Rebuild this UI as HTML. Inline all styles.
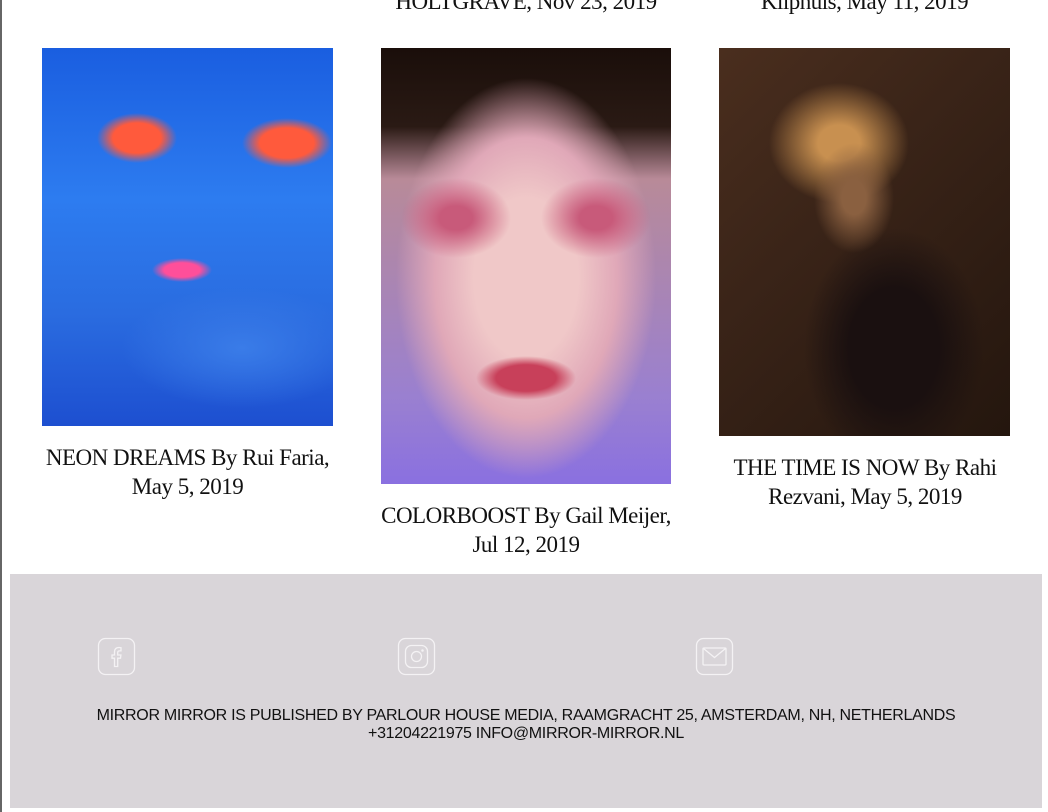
<!DOCTYPE html>
<html><head><meta charset="utf-8"><style>
*{margin:0;padding:0;box-sizing:border-box}
html,body{width:1048px;height:812px;overflow:hidden;background:#fff}
body{position:relative;font-family:"Liberation Serif",serif}
.lb{position:absolute;left:0;top:0;width:2px;height:812px;background:#666}
.img{position:absolute}
.cap{position:absolute;text-align:center;font-size:23px;line-height:29px;color:#111;letter-spacing:-0.5px}
.top{position:absolute;top:-13px;font-size:23px;line-height:29px;color:#111;text-align:center;letter-spacing:-0.5px}
.foot{position:absolute;left:10px;top:574px;width:1032px;height:234px;background:#d9d5d9}
.ic{position:absolute;top:637px;width:39px;height:39px}
.ft{position:absolute;left:10px;width:1032px;top:707px;text-align:center;font-family:"Liberation Sans",sans-serif;font-size:16px;line-height:18px;color:#111;letter-spacing:-0.3px}
</style></head><body>
<div class="lb"></div>
<div class="top" style="left:381px;width:290px">HOLTGRAVE, Nov 23, 2019</div>
<div class="top" style="left:719px;width:291px">Kliphuis, May 11, 2019</div>

<div class="img" style="left:42px;top:48px;width:291px;height:378px;background:
radial-gradient(ellipse 40px 25px at 95px 90px,#ff5a3c 60%,transparent 100%),
radial-gradient(ellipse 45px 25px at 245px 95px,#ff5a3c 60%,transparent 100%),
radial-gradient(ellipse 30px 12px at 140px 222px,#ff4f9a 60%,transparent 100%),
radial-gradient(ellipse 120px 60px at 200px 300px,#3a7ce8 0%,transparent 100%),
linear-gradient(180deg,#1a5ee0 0%,#2d7cf0 40%,#2a6ce0 70%,#1d4fd0 100%)"></div>

<div class="img" style="left:381px;top:48px;width:290px;height:436px;background:
radial-gradient(ellipse 50px 22px at 145px 330px,#c8405a 60%,transparent 100%),
radial-gradient(ellipse 55px 40px at 75px 170px,#c85a7a 30%,transparent 100%),
radial-gradient(ellipse 55px 40px at 215px 170px,#c85a7a 30%,transparent 100%),
radial-gradient(ellipse 130px 200px at 145px 230px,#f0c8c8 40%,#e0a8b8 70%,transparent 100%),
linear-gradient(180deg,#1a0e0a 0%,#2a1a14 18%,#b88a98 30%,#9a80d0 80%,#8a70e0 100%)"></div>

<div class="img" style="left:719px;top:48px;width:291px;height:388px;background:
radial-gradient(ellipse 40px 55px at 135px 150px,#8a6040 30%,transparent 100%),
radial-gradient(ellipse 70px 60px at 120px 95px,#c89050 30%,transparent 100%),
radial-gradient(ellipse 90px 120px at 175px 300px,#1a1010 50%,transparent 100%),
linear-gradient(135deg,#4a2e1e 0%,#3a2418 40%,#24160e 100%)"></div>

<div class="cap" style="left:30px;width:315px;top:443px">NEON DREAMS By Rui Faria,<br>May 5, 2019</div>
<div class="cap" style="left:366px;width:320px;top:501px">COLORBOOST By Gail Meijer,<br>Jul 12, 2019</div>
<div class="cap" style="left:710px;width:310px;top:453px">THE TIME IS NOW By Rahi<br>Rezvani, May 5, 2019</div>

<div class="foot"></div>
<svg class="ic" style="left:97px" viewBox="0 0 39 39" fill="none" stroke="#f4f2f4" stroke-width="1.3">
<rect x="1.5" y="1.5" width="36" height="36" rx="7"/>
<path d="M22 10.5c-3 0-4.5 1.7-4.5 4.7v2.8h-2.5v3.2h2.5v8.3h3.2v-8.3h2.8l.4-3.2h-3.2v-2.4c0-1 .4-1.7 1.8-1.7h1.5v-3.2c-.5-.1-1.2-.2-2-.2z"/></svg>
<svg class="ic" style="left:397px" viewBox="0 0 39 39" fill="none" stroke="#f4f2f4" stroke-width="1.3">
<rect x="1.5" y="1.5" width="36" height="36" rx="7"/>
<rect x="8.5" y="8.5" width="22" height="22" rx="6"/>
<circle cx="19.5" cy="19.5" r="5"/><circle cx="25.5" cy="13.5" r=".6" fill="#fff"/></svg>
<svg class="ic" style="left:695px" viewBox="0 0 39 39" fill="none" stroke="#f4f2f4" stroke-width="1.3">
<rect x="1.5" y="1.5" width="36" height="36" rx="7"/>
<rect x="8" y="11" width="23" height="17" rx="1"/>
<path d="M8.5 11.5l11 9 11-9"/></svg>

<div class="ft">MIRROR MIRROR IS PUBLISHED BY PARLOUR HOUSE MEDIA, RAAMGRACHT 25, AMSTERDAM, NH, NETHERLANDS<br>+31204221975 INFO@MIRROR-MIRROR.NL</div>
</body></html>
